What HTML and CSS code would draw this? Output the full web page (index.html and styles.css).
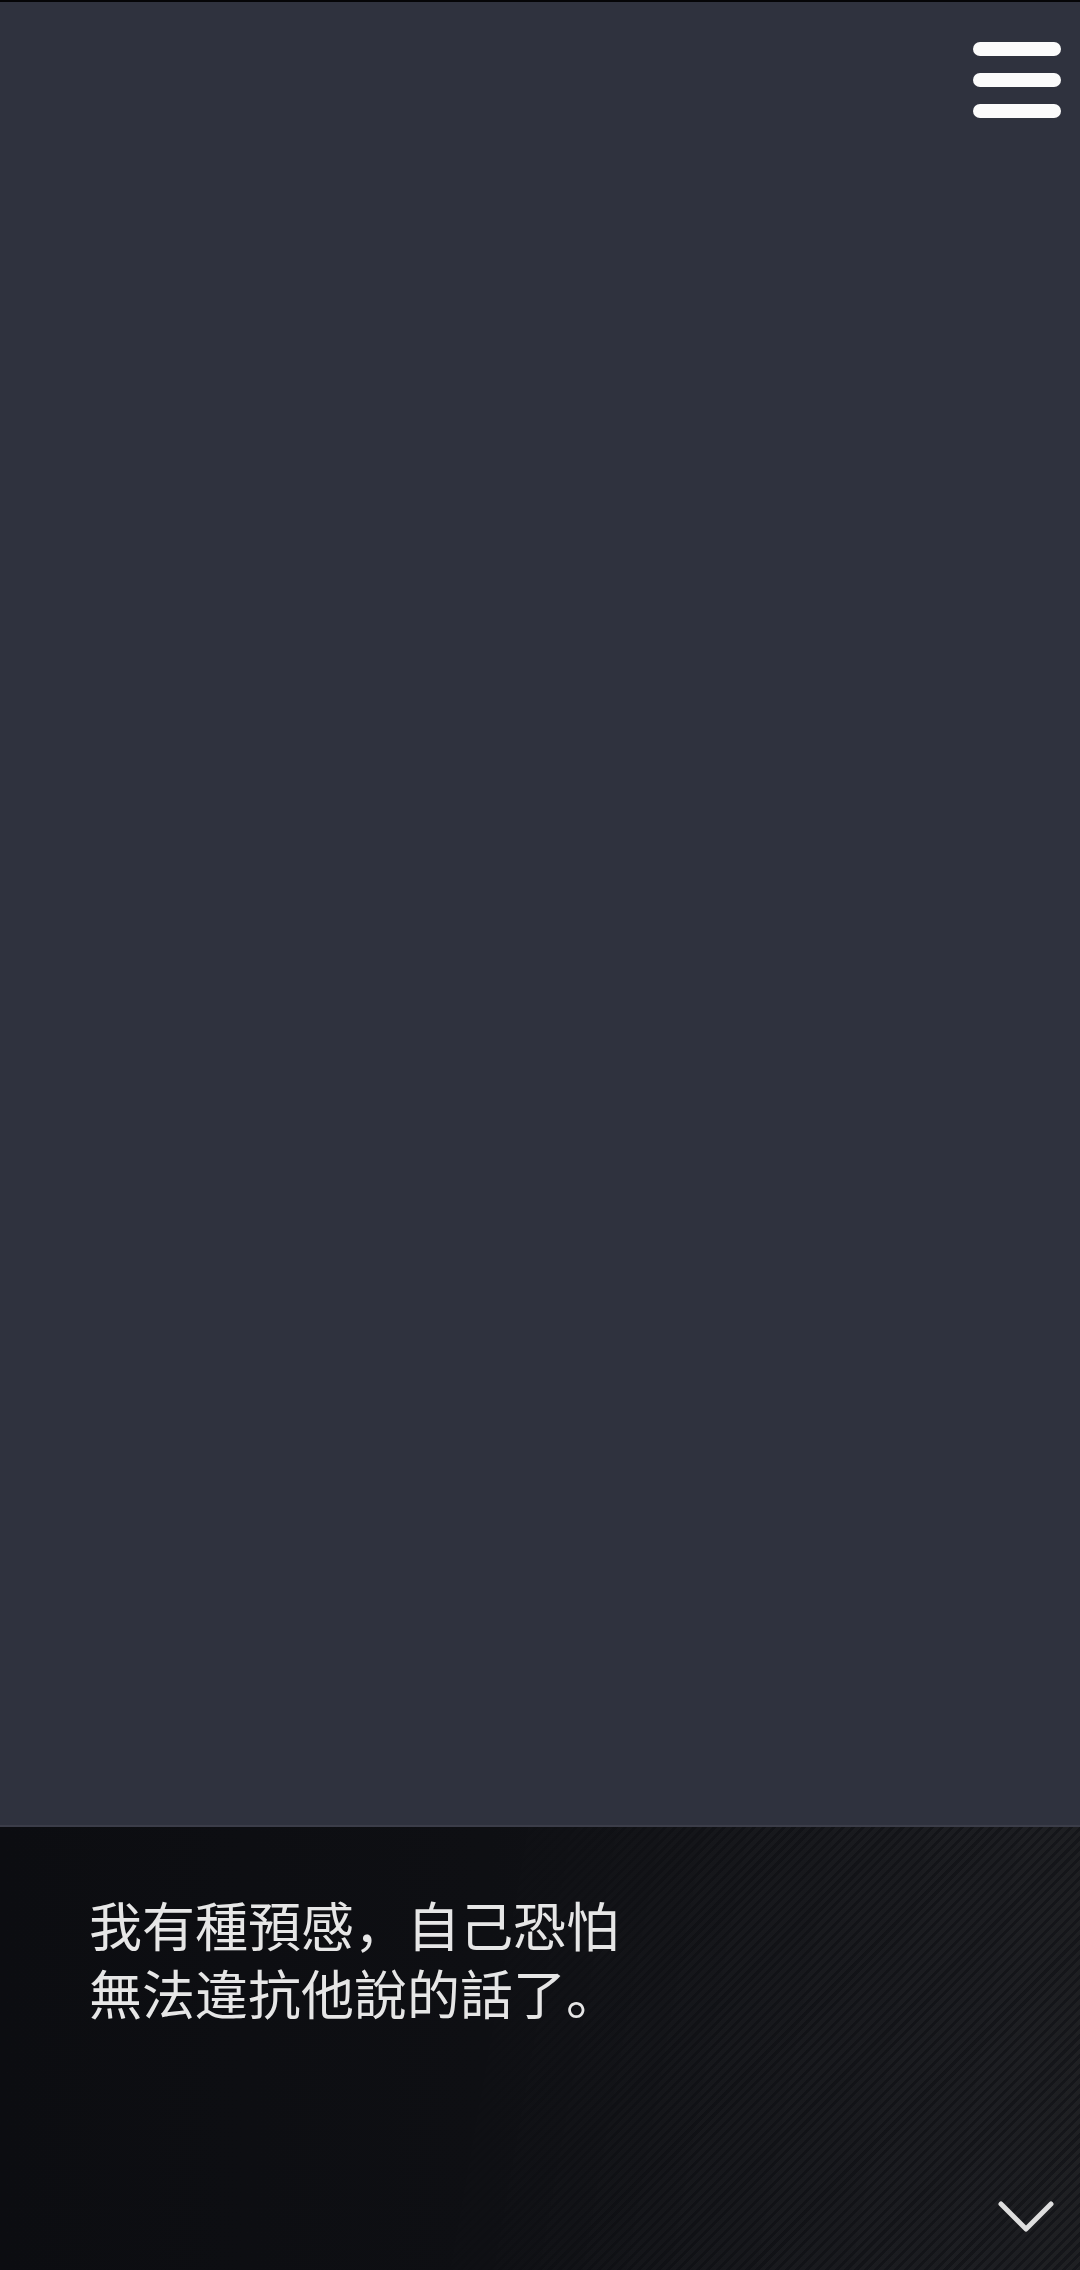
FILE: index.html
```html
<!DOCTYPE html>
<html lang="zh">
<head>
<meta charset="utf-8">
<title>Story</title>
<link rel="stylesheet" href="styles.css">
</head>
<body>
<div class="screen">
  <div class="topline"></div>
  <main class="stage">
    <header class="header">
      <button class="menu" aria-label="menu">
        <span class="bar"></span>
        <span class="bar"></span>
        <span class="bar"></span>
      </button>
    </header>
  </main>
  <section class="dialog">
    <p class="line">我有種預感，自己恐怕<br>無法違抗他說的話了。</p>
    <svg class="next" width="58" height="36" viewBox="0 0 58 36" aria-hidden="true">
      <polyline points="4,4 29,29 54,4" fill="none" stroke="#dedede" stroke-width="5" stroke-linecap="round" stroke-linejoin="round"/>
    </svg>
  </section>
</div>
</body>
</html>
```
FILE: styles.css
```css
html, body {
  margin: 0;
  padding: 0;
  background: #2f323e;
}
.screen {
  width: 1080px;
  height: 2270px;
  display: flex;
  flex-direction: column;
  overflow: hidden;
  font-family: "Noto Sans CJK SC", "Noto Sans CJK JP", sans-serif;
}
.topline {
  height: 2px;
  background: #050507;
  flex: none;
}
.stage {
  flex: 1;
  background: #2f323e;
}
.header {
  display: flex;
  justify-content: flex-end;
  padding: 40px 19px 0 0;
}
.menu {
  display: flex;
  flex-direction: column;
  gap: 17px;
  padding: 0;
  margin: 0;
  border: 0;
  background: none;
}
.bar {
  display: block;
  width: 88px;
  height: 14px;
  border-radius: 7px;
  background: #fbfbfb;
}
.dialog {
  position: relative;
  flex: none;
  height: 443px;
  border-top: 2px solid #3b3d49;
  display: flex;
  flex-direction: column;
  background: linear-gradient(90deg, #0c0d11 0%, #0e0f13 45%, #15161a 100%);
}
.dialog::before {
  content: "";
  position: absolute;
  inset: 0;
  background: repeating-linear-gradient(135deg, rgba(255,255,255,0.0) 0px, rgba(255,255,255,0.0) 3px, rgba(255,255,255,0.045) 3px, rgba(255,255,255,0.045) 7px);
  -webkit-mask-image: linear-gradient(100deg, transparent 40%, rgba(0,0,0,0.6) 65%, #000 100%);
  mask-image: linear-gradient(100deg, transparent 40%, rgba(0,0,0,0.6) 65%, #000 100%);
  pointer-events: none;
}
.line {
  position: relative;
  margin: 0;
  padding: 63px 0 0 89px;
  font-size: 53px;
  line-height: 68px;
  font-weight: 400;
  color: #e6e6e6;
  letter-spacing: 0;
}
.next {
  position: relative;
  margin-top: auto;
  align-self: flex-end;
  margin-right: 25px;
  margin-bottom: 34px;
}
```
